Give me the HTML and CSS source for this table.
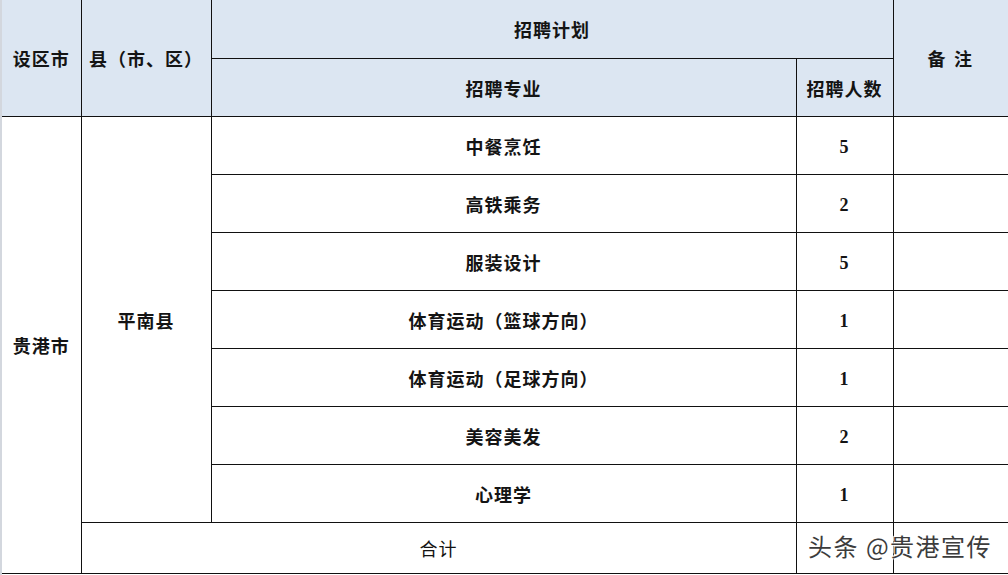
FILE: index.html
```html
<!DOCTYPE html>
<html lang="zh-CN">
<head>
<meta charset="utf-8">
<title>招聘计划</title>
<link rel="stylesheet" href="styles.css">
</head>
<body>
<div class="page">
  <table class="plan">
    <colgroup>
      <col class="c-city">
      <col class="c-county">
      <col class="c-major">
      <col class="c-count">
      <col class="c-note">
    </colgroup>
    <thead>
      <tr class="h1">
        <th rowspan="2">设区市</th>
        <th rowspan="2">县（市、区）</th>
        <th colspan="2">招聘计划</th>
        <th rowspan="2" class="note">备&nbsp;注</th>
      </tr>
      <tr class="h2">
        <th>招聘专业</th>
        <th>招聘人数</th>
      </tr>
    </thead>
    <tbody>
      <tr>
        <td rowspan="8" class="b">贵港市</td>
        <td rowspan="7" class="b">平南县</td>
        <td class="b">中餐烹饪</td>
        <td class="num">5</td>
        <td class="last"></td>
      </tr>
      <tr><td class="b">高铁乘务</td><td class="num">2</td><td class="last"></td></tr>
      <tr><td class="b">服装设计</td><td class="num">5</td><td class="last"></td></tr>
      <tr><td class="b">体育运动（篮球方向）</td><td class="num">1</td><td class="last"></td></tr>
      <tr><td class="b">体育运动（足球方向）</td><td class="num">1</td><td class="last"></td></tr>
      <tr><td class="b">美容美发</td><td class="num">2</td><td class="last"></td></tr>
      <tr><td class="b">心理学</td><td class="num">1</td><td class="last"></td></tr>
      <tr class="total">
        <td colspan="2" class="sum">合计</td>
        <td></td>
        <td class="last"></td>
      </tr>
    </tbody>
  </table>
  <div class="watermark">头条 @贵港宣传</div>
</div>
</body>
</html>
```

FILE: styles.css
```css
html, body {
  margin: 0;
  padding: 0;
  background: #ffffff;
}

.page {
  position: relative;
  width: 1008px;
  height: 575px;
  overflow: hidden;
  border-left: 2px solid #d3d7de;
  box-sizing: border-box;
}

.plan {
  border-collapse: collapse;
  table-layout: fixed;
  width: 1006px;
  font-family: "Liberation Serif", "Noto Sans CJK SC", serif;
  font-size: 18px;
  color: #141414;
  letter-spacing: 1px;
}

.c-city { width: 79px; }
.c-county { width: 130px; }
.c-major { width: 585px; }
.c-count { width: 97px; }
.c-note { width: 115px; }

.plan th,
.plan td {
  border: 1.5px solid #111;
  padding: 0;
  text-align: center;
  vertical-align: middle;
  height: 57px;
}

.plan tr:first-child th { border-top: none; }
.plan tr th:first-child,
.plan tr td:first-child { border-left: none; }
.plan .note,
.plan .last { border-right: none; }

.plan thead th {
  background: #dce6f2;
  font-weight: 700;
}

.plan .h1 th { height: 58px; }
.plan .h2 th { height: 57px; }

.plan .note { letter-spacing: 2px; }

.plan .b { font-weight: 700; }

.plan td.num {
  font-weight: 700;
  font-family: "Liberation Serif", serif;
  padding-top: 3px;
  height: 54px;
}

.plan .total td { height: 50px; }

.plan .sum {
  font-weight: 400;
}

.watermark {
  position: absolute;
  left: 806px;
  top: 528px;
  font-family: "Noto Sans CJK SC", "Noto Sans", sans-serif;
  font-size: 24px;
  color: #3c3c3c;
  letter-spacing: 1.5px;
  text-shadow: 0 0 2px #fff, 0 0 2px #fff, 1px 1px 1px #fff, -1px -1px 1px #fff;
}
```
